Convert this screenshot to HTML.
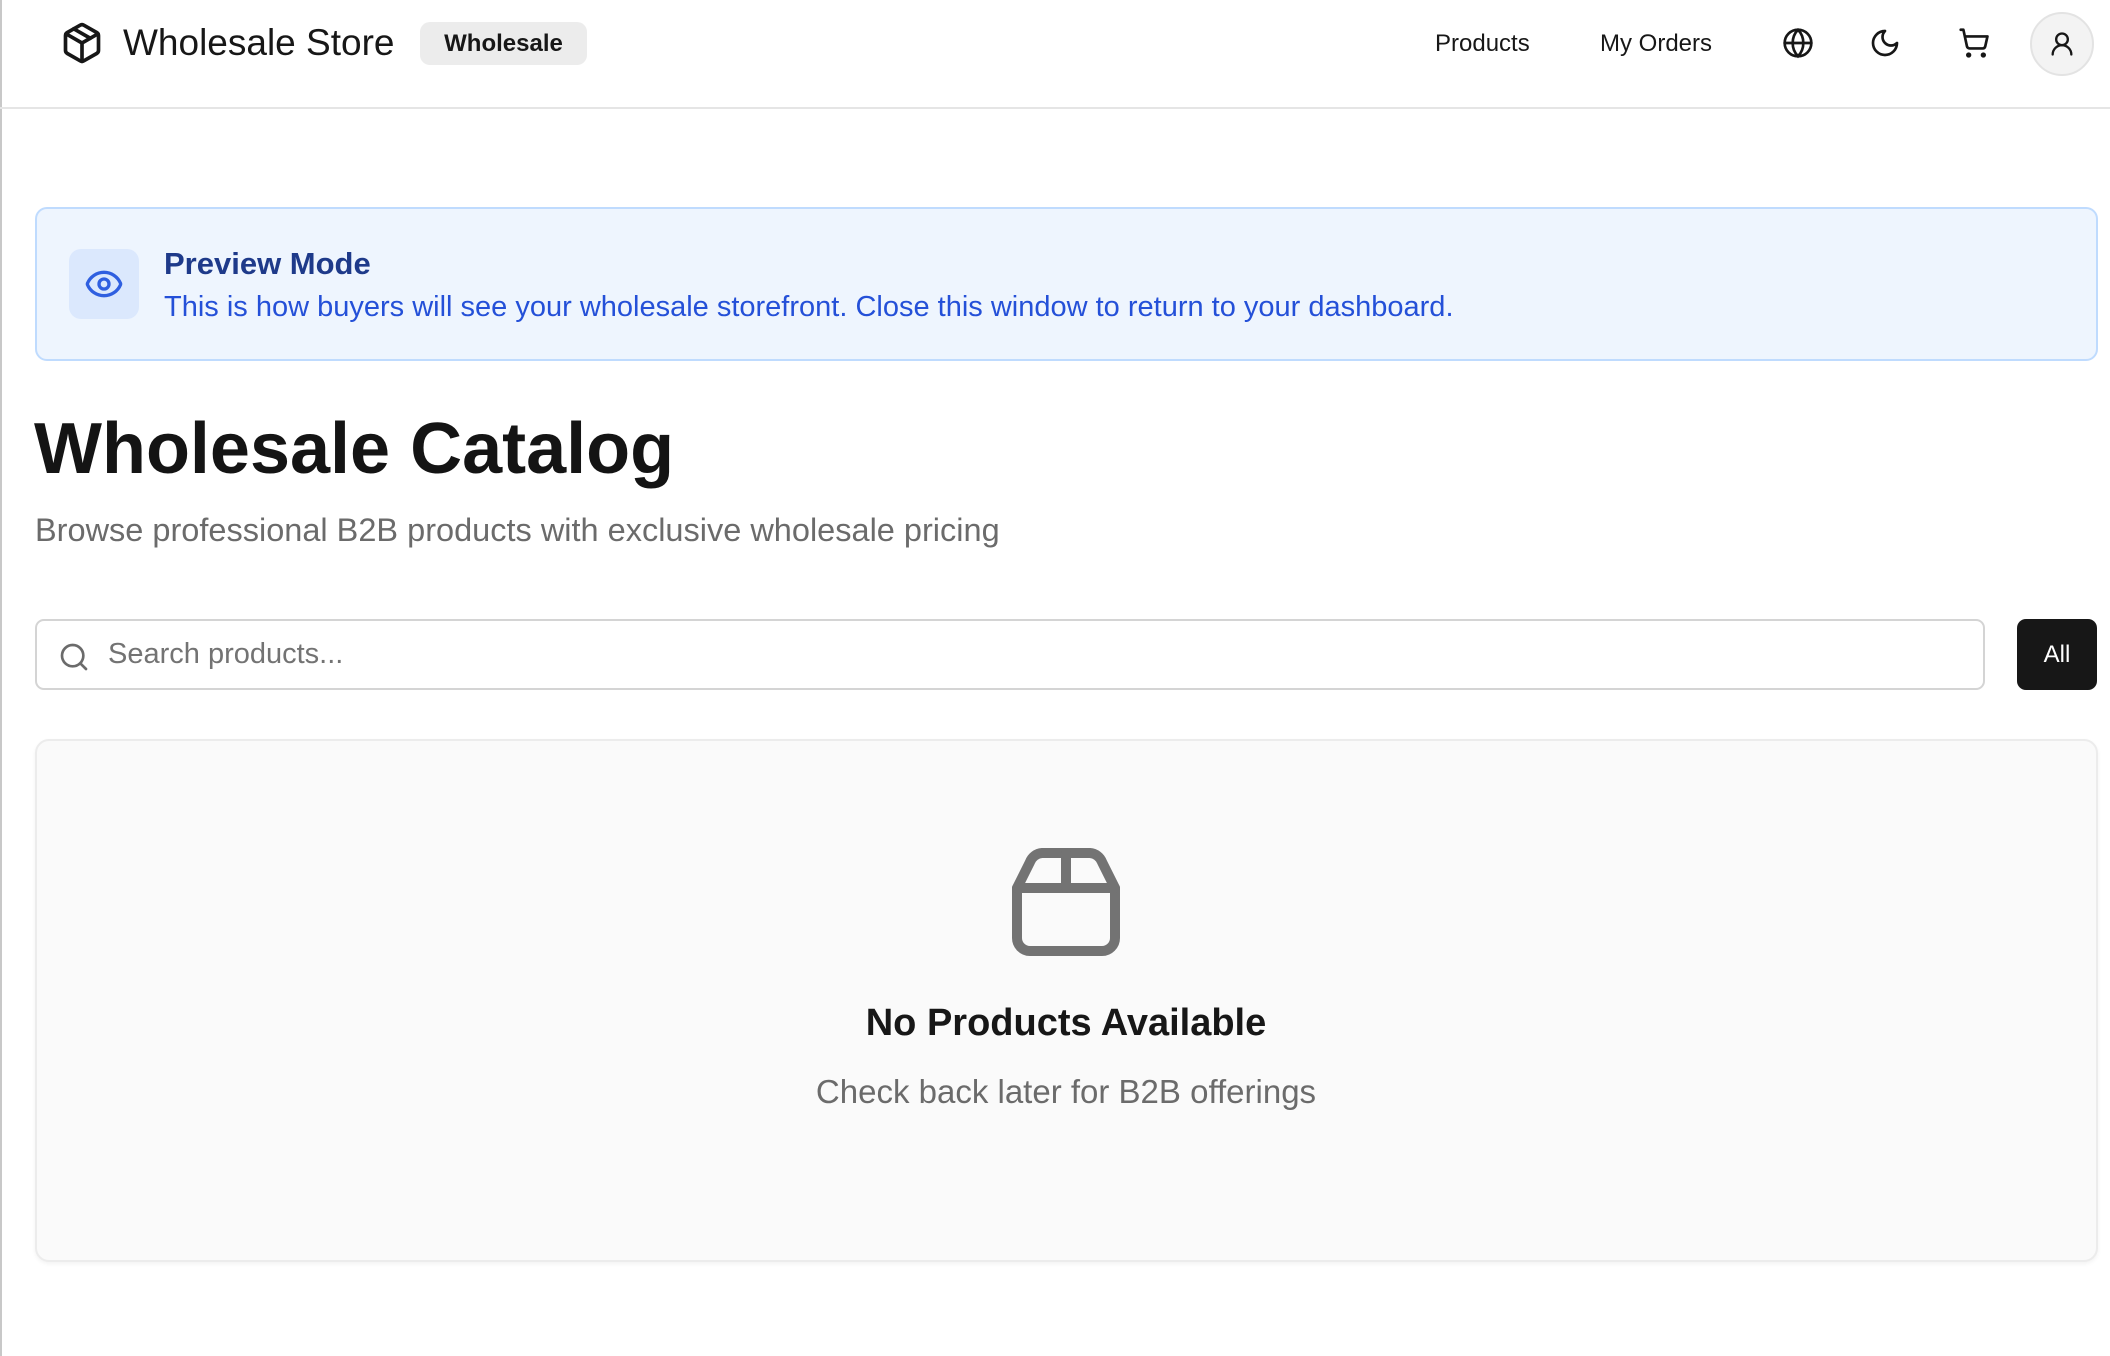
<!DOCTYPE html>
<html><head><meta charset="utf-8"><style>
*{box-sizing:border-box;margin:0;padding:0}
body{width:2110px;height:1356px;background:#fff;font-family:"Liberation Sans",sans-serif;color:#171717;position:relative;overflow:hidden}
.abs{position:absolute}
header{position:absolute;left:0;top:0;width:2110px;height:109px;border-bottom:2px solid #e5e5e5}
.nav{font-size:24px;color:#171717}
svg{display:block}
</style></head><body>
<div class="abs" style="left:0;top:0;width:2px;height:1356px;background:#c8c8c8"></div>
<header>
<svg class="abs" style="left:60px;top:21px" width="44" height="44" viewBox="0 0 24 24" fill="none" stroke="#171717" stroke-width="2" stroke-linecap="round" stroke-linejoin="round"><path d="M11 21.73a2 2 0 0 0 2 0l7-4A2 2 0 0 0 21 16V8a2 2 0 0 0-1-1.73l-7-4a2 2 0 0 0-2 0l-7 4A2 2 0 0 0 3 8v8a2 2 0 0 0 1 1.73z"/><path d="M12 22V12"/><path d="M3.3 7 12 12l8.7-5"/><path d="m7.5 4.27 9 5.15"/></svg>
<div class="abs" style="left:123px;top:21px;font-size:37px;font-weight:500;line-height:44px">Wholesale Store</div>
<div class="abs" style="left:420px;top:22px;width:167px;height:43px;background:#ececec;border-radius:10px;font-size:24px;font-weight:600;text-align:center;line-height:43px">Wholesale</div>
<div class="abs nav" style="left:1435px;top:30px">Products</div>
<div class="abs nav" style="left:1600px;top:30px">My Orders</div>
<svg class="abs" style="left:1782px;top:27px" width="32" height="32" viewBox="0 0 24 24" fill="none" stroke="#171717" stroke-width="2" stroke-linecap="round"><circle cx="12" cy="12" r="10"/><path d="M12 2a14.5 14.5 0 0 0 0 20 14.5 14.5 0 0 0 0-20"/><path d="M2 12h20"/></svg>
<svg class="abs" style="left:1869px;top:27px" width="32" height="32" viewBox="0 0 24 24" fill="none" stroke="#171717" stroke-width="2" stroke-linecap="round" stroke-linejoin="round"><path d="M12 3a6 6 0 0 0 9 9 9 9 0 1 1-9-9Z"/></svg>
<svg class="abs" style="left:1958px;top:27px" width="32" height="32" viewBox="0 0 24 24" fill="none" stroke="#171717" stroke-width="2" stroke-linecap="round" stroke-linejoin="round"><circle cx="8" cy="21" r="1"/><circle cx="19" cy="21" r="1"/><path d="M2.05 2.05h2l2.66 12.42a2 2 0 0 0 2 1.58h9.78a2 2 0 0 0 1.95-1.57l1.65-7.43H5.12"/></svg>
<div class="abs" style="left:2030px;top:12px;width:64px;height:64px;border-radius:50%;background:#f3f3f3;border:2px solid #e3e3e3"></div>
<svg class="abs" style="left:2048px;top:28px" width="28" height="32" viewBox="0 0 24 24" fill="none" stroke="#171717" stroke-width="2" stroke-linecap="round"><circle cx="12" cy="8" r="5"/><path d="M20 21a8 8 0 0 0-16 0"/></svg>
</header>

<div class="abs" style="left:35px;top:207px;width:2063px;height:154px;background:#eef5fe;border:2px solid #bfdbfe;border-radius:12px"></div>
<div class="abs" style="left:69px;top:249px;width:70px;height:70px;background:#dbe8fd;border-radius:12px"></div>
<svg class="abs" style="left:84px;top:264px" width="40" height="40" viewBox="0 0 24 24" fill="none" stroke="#2f5fe0" stroke-width="2" stroke-linecap="round"><path d="M2.06 12.35a1 1 0 0 1 0-.7 10.75 10.75 0 0 1 19.88 0 1 1 0 0 1 0 .7 10.75 10.75 0 0 1-19.88 0"/><circle cx="12" cy="12" r="3"/></svg>
<div class="abs" style="left:164px;top:246px;font-size:31px;font-weight:600;color:#1e3a8a">Preview Mode</div>
<div class="abs" style="left:164px;top:291px;font-size:29px;color:#2450d8;white-space:nowrap">This is how buyers will see your wholesale storefront. Close this window to return to your dashboard.</div>

<div class="abs" style="left:34px;top:408px;font-size:72px;font-weight:700;color:#141414">Wholesale Catalog</div>
<div class="abs" style="left:35px;top:512px;font-size:32.5px;color:#6b6b6b;white-space:nowrap">Browse professional B2B products with exclusive wholesale pricing</div>

<div class="abs" style="left:35px;top:619px;width:1950px;height:71px;border:2px solid #d4d4d4;border-radius:9px"></div>
<svg class="abs" style="left:58px;top:641px" width="32" height="32" viewBox="0 0 24 24" fill="none" stroke="#6b6b6b" stroke-width="2" stroke-linecap="round"><circle cx="11" cy="11" r="8"/><path d="m21 21-4.3-4.3"/></svg>
<div class="abs" style="left:108px;top:638px;font-size:29px;color:#737373">Search products...</div>
<div class="abs" style="left:2017px;top:619px;width:80px;height:71px;background:#171717;border-radius:9px;color:#fff;font-size:24px;text-align:center;line-height:71px">All</div>

<div class="abs" style="left:35px;top:739px;width:2063px;height:523px;background:#fafafa;border:2px solid #ececec;border-radius:14px;box-shadow:0 2px 4px rgba(0,0,0,.05)"></div>
<svg class="abs" style="left:1010px;top:846px" width="112" height="110" viewBox="0 0 112 110" fill="none" stroke="#737373" stroke-width="10" stroke-linecap="round" stroke-linejoin="round"><path d="M7 42H105V92a13 13 0 0 1-13 13H20a13 13 0 0 1-13-13Z"/><path d="M7 42L20 16a14 14 0 0 1 12-9H80a14 14 0 0 1 12 9L105 42"/><path d="M56 7V42"/></svg>
<div class="abs" style="left:0;width:2132px;top:1002px;text-align:center;font-size:38px;font-weight:600;color:#171717">No Products Available</div>
<div class="abs" style="left:0;width:2132px;top:1073px;text-align:center;font-size:33px;color:#6b6b6b">Check back later for B2B offerings</div>
</body></html>
